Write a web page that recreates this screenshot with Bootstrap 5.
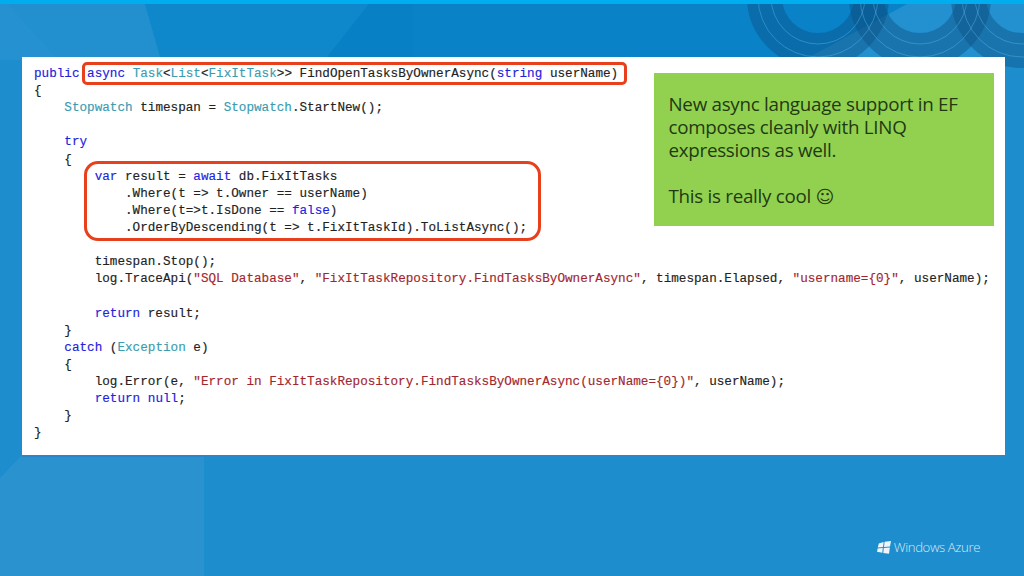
<!DOCTYPE html>
<html lang="en">
<head>
<meta charset="utf-8">
<title>Async EF</title>
<link rel="stylesheet" href="https://cdn.jsdelivr.net/npm/bootstrap@5.3.0/dist/css/bootstrap.min.css">
<style>
html,body{height:100%;overflow:hidden}
body{background:#1e8dce}
.slide-stage{width:1024px;height:576px;padding:57px 19px 121px 22px}
.slide-art{inset:0;z-index:0}
.code-panel{z-index:1;height:398px;padding:8px 0 0 12px}
.code-text{font-family:"Liberation Mono",monospace;font-size:12.65px;line-height:17.12px;color:#222;-webkit-text-stroke:.15px}
.code-line{white-space:pre;height:17.12px}
.kw{color:#2222dd}.ty{color:#3a9cb0}.st{color:#a3262e}
.call-box{border:3px solid #e8401c;border-radius:5px}
.call-one{left:60px;top:5px;width:545px;height:23px}
.call-two{left:62px;top:104px;width:457px;height:80px;border-radius:14px}
.note-box{left:632px;top:16px;width:340px;height:153px;background:#92d14f;color:#1f3a12;font-family:"Open Sans",sans-serif;font-size:18.8px;letter-spacing:-.28px;line-height:23px;padding:20px 15px 20px 14.5px}
.note-box p{margin:0 0 23px}
.smile-glyph{font-family:"DejaVu Sans",sans-serif;font-size:18px;letter-spacing:0}
.azure-mark{right:44px;bottom:21px;z-index:1;color:#d5e8f5;font-family:"Open Sans",sans-serif;font-size:13.2px;font-weight:300;letter-spacing:-.4px;line-height:16px}
.logo-gap{gap:3px}
</style>
</head>
<body class="m-0">
<div class="slide-stage position-relative overflow-hidden">
  <svg class="slide-art position-absolute" width="1024" height="576" viewBox="0 0 1024 576" aria-hidden="true">
    <rect width="1024" height="576" fill="#1e8dce"/>
    <rect width="1024" height="60" fill="#0a82c8"/>
    <polygon points="145,4 369,4 325,60 161,60" fill="#0e87cb"/>
    <polygon points="369,4 413,4 413,60 325,60" fill="#0780c5"/>
    <polygon points="0,4 145,4 161,60 0,60" fill="#2290cf"/>
    <polygon points="0,4 8,4 58,60 0,60" fill="#2691d0"/>
    <rect y="455" width="204" height="121" fill="#2b92d0"/>
    <polygon points="0,455 22,455 0,478" fill="#1e8dce"/>
    <rect x="22" y="455" width="983" height="2" fill="#2a86c6"/>
    <polygon points="907,4 1024,4 1024,60 804,60" fill="#2390cf"/>
    <g fill="none">
      <g stroke="#0b4f80" stroke-opacity=".42" stroke-width="35">
        <circle cx="818" cy="-3" r="53.5"/>
        <circle cx="920" cy="-3" r="53.5"/>
        <circle cx="1022" cy="-3" r="53.5"/>
      </g>
      <g stroke="#56b3e4" stroke-opacity=".45" stroke-width="1">
        <circle cx="818" cy="-3" r="47"/><circle cx="818" cy="-3" r="60"/>
        <circle cx="920" cy="-3" r="47"/><circle cx="920" cy="-3" r="60"/>
        <circle cx="1022" cy="-3" r="47"/><circle cx="1022" cy="-3" r="60"/>
      </g>
    </g>
    <rect width="1024" height="4" fill="#00aeef"/>
  </svg>
  <main class="code-panel position-relative bg-white">
    <div class="code-text">
      <div class="code-line"><span class="kw">public</span><span> </span><span class="kw">async</span><span> </span><span class="ty">Task</span><span>&lt;</span><span class="ty">List</span><span>&lt;</span><span class="ty">FixItTask</span><span>&gt;&gt; FindOpenTasksByOwnerAsync(</span><span class="kw">string</span><span> userName)</span></div>
      <div class="code-line"><span>{</span></div>
      <div class="code-line"><span>    </span><span class="ty">Stopwatch</span><span> timespan = </span><span class="ty">Stopwatch</span><span>.StartNew();</span></div>
      <div class="code-line"> </div>
      <div class="code-line"><span>    </span><span class="kw">try</span></div>
      <div class="code-line"><span>    {</span></div>
      <div class="code-line"><span>        </span><span class="kw">var</span><span> result = </span><span class="kw">await</span><span> db.FixItTasks</span></div>
      <div class="code-line"><span>            .Where(t =&gt; t.Owner == userName)</span></div>
      <div class="code-line"><span>            .Where(t=&gt;t.IsDone == </span><span class="kw">false</span><span>)</span></div>
      <div class="code-line"><span>            .OrderByDescending(t =&gt; t.FixItTaskId).ToListAsync();</span></div>
      <div class="code-line"> </div>
      <div class="code-line"><span>        timespan.Stop();</span></div>
      <div class="code-line"><span>        log.TraceApi(</span><span class="st">"SQL Database"</span><span>, </span><span class="st">"FixItTaskRepository.FindTasksByOwnerAsync"</span><span>, timespan.Elapsed, </span><span class="st">"username={0}"</span><span>, userName);</span></div>
      <div class="code-line"> </div>
      <div class="code-line"><span>        </span><span class="kw">return</span><span> result;</span></div>
      <div class="code-line"><span>    }</span></div>
      <div class="code-line"><span>    </span><span class="kw">catch</span><span> (</span><span class="ty">Exception</span><span> e)</span></div>
      <div class="code-line"><span>    {</span></div>
      <div class="code-line"><span>        log.Error(e, </span><span class="st">"Error in FixItTaskRepository.FindTasksByOwnerAsync(userName={0})"</span><span>, userName);</span></div>
      <div class="code-line"><span>        </span><span class="kw">return</span><span> </span><span class="kw">null</span><span>;</span></div>
      <div class="code-line"><span>    }</span></div>
      <div class="code-line"><span>}</span></div>
    </div>
    <div class="call-box call-one position-absolute"></div>
    <div class="call-box call-two position-absolute"></div>
    <aside class="note-box position-absolute">
      <p>New async language support in EF composes cleanly with LINQ expressions as well.</p>
      <p><span>This is really cool </span><span class="smile-glyph">☺</span></p>
    </aside>
  </main>
  <div class="azure-mark position-absolute d-flex align-items-center logo-gap">
    <svg width="14" height="13" viewBox="0 0 14 13" aria-hidden="true"><g fill="#eef6fb"><polygon points="1.8,2.5 6.6,1 6,6 0.8,6.5"/><polygon points="7.6,.8 14,0 13,5.5 7,6"/><polygon points="0.7,7.5 5.8,7 5.3,11.8 0,10.8"/><polygon points="6.8,7 12.8,6.5 12,12.8 6.3,12"/></g></svg>
    <span>Windows Azure</span>
  </div>
</div>
<script src="https://cdn.jsdelivr.net/npm/bootstrap@5.3.0/dist/js/bootstrap.bundle.min.js"></script>
</body>
</html>
